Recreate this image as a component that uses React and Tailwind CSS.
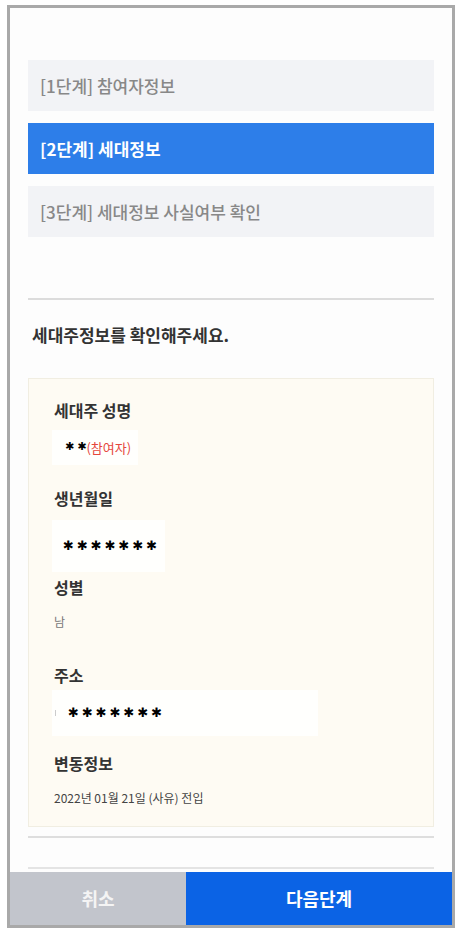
import React from "react";

const F = { fontFamily: '"Noto Sans CJK KR", "Noto Sans", sans-serif' };

function Stars({ n, cls }) {
  return (
    <span className={`font-[DejaVu_Sans] text-black ${cls}`}>{"✱".repeat(n)}</span>
  );
}

export default function App() {
  return (
    <div className="bg-white w-[460px] h-[935px] pt-[5px] pl-[7px]" style={F}>
      <div className="w-[448px] h-[923px] border-[3px] border-[#a9a9a9] bg-[#fdfdfd] flex flex-col">
        <div className="flex-1 px-[18px] pt-[52px] flex flex-col">
          <div className="flex flex-col gap-[12px]">
            <div className="h-[51px] bg-[#f2f3f6] flex items-center pl-[12px] text-[17px] text-[#888] font-medium">
              [1단계] 참여자정보
            </div>
            <div className="h-[51px] bg-[#2d7ee9] flex items-center pl-[12px] text-[17px] text-white font-bold">
              [2단계] 세대정보
            </div>
            <div className="h-[51px] bg-[#f2f3f6] flex items-center pl-[12px] text-[17px] text-[#888] font-medium">
              [3단계] 세대정보 사실여부 확인
            </div>
          </div>
          <div className="mt-[61px] h-[2px] bg-[#dcdcdc]" />
          <div className="mt-[23px] pl-[4px] h-[24px] leading-[24px] text-[17px] font-bold text-[#333]">
            세대주정보를 확인해주세요.
          </div>
          <div className="mt-[31px] h-[449px] bg-[#fefbf3] border border-[#f1eee2] pl-[25px] pt-[21px] flex flex-col">
            <div className="h-[20px] leading-[20px] text-[16px] font-bold text-[#333]">세대주 성명</div>
            <div className="-ml-[2px] mt-[10px] h-[35px] w-[86px] bg-[#fffffd] flex items-center pl-[13px]">
              <Stars n={1} cls="text-[11px] mr-[3px]" />
              <Stars n={1} cls="text-[11px]" />
              <span className="text-[13px] text-[#e5463c]">(참여자)</span>
            </div>
            <div className="mt-[23px] h-[20px] leading-[20px] text-[16px] font-bold text-[#333]">생년월일</div>
            <div className="-ml-[2px] mt-[12px] h-[52px] w-[113px] bg-[#fffffd] flex items-center pl-[11px]">
              <Stars n={7} cls="text-[13px] tracking-[3px]" />
            </div>
            <div className="mt-[5px] h-[20px] leading-[20px] text-[16px] font-bold text-[#333]">성별</div>
            <div className="mt-[16px] h-[18px] leading-[18px] text-[12px] text-[#777]">남</div>
            <div className="mt-[34px] h-[20px] leading-[20px] text-[16px] font-bold text-[#333]">주소</div>
            <div className="-ml-[2px] mt-[5px] h-[46px] w-[266px] bg-[#fffffd] flex items-center pl-[3px]">
              <span className="w-[1px] h-[6px] bg-[#ccc] mr-[12px]" />
              <Stars n={7} cls="text-[13px] tracking-[3px]" />
            </div>
            <div className="mt-[17px] h-[20px] leading-[20px] text-[16px] font-bold text-[#333]">변동정보</div>
            <div className="mt-[16px] h-[18px] leading-[18px] text-[12px] text-[#444]">2022년 01월 21일 (사유) 전입</div>
          </div>
          <div className="mt-[9px] h-[2px] bg-[#dedede]" />
          <div className="mt-[29px] h-[2px] bg-[#e4e4e4]" />
        </div>
        <div className="mt-[2px] h-[53px] flex">
          <div className="w-[176px] bg-[#c2c5cc] flex items-center justify-center text-[18px] font-bold text-[#f4f4f4]">
            취소
          </div>
          <div className="flex-1 bg-[#0b63e5] flex items-center justify-center text-[18px] font-bold text-white">
            다음단계
          </div>
        </div>
      </div>
    </div>
  );
}
